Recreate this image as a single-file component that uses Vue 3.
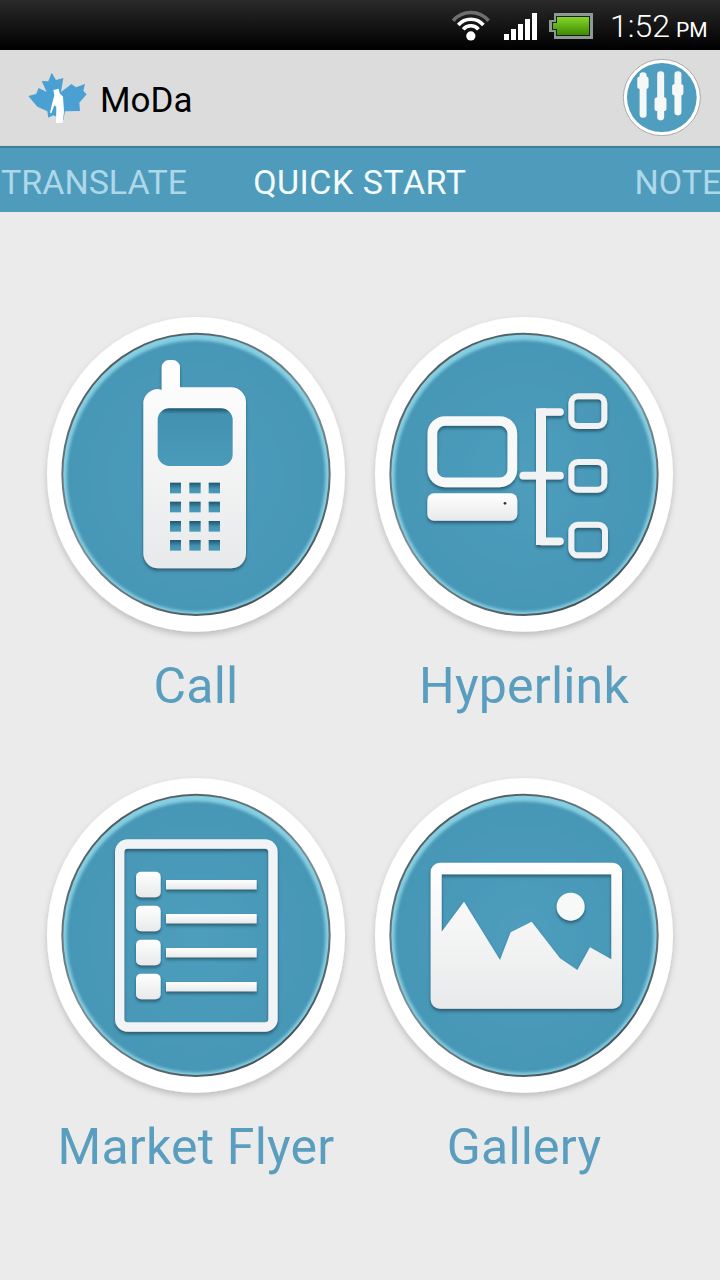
<template>
  <div class="screen">
    <svg class="defs" width="0" height="0">
      <defs>
        <linearGradient id="white" x1="0" y1="0" x2="0" y2="1">
          <stop offset="0" stop-color="#ffffff" />
          <stop offset="1" stop-color="#e8e9ea" />
        </linearGradient>
        <linearGradient id="hole" x1="0" y1="0" x2="0" y2="1">
          <stop offset="0" stop-color="#1d566d" />
          <stop offset="0.55" stop-color="#4391b0" />
          <stop offset="1" stop-color="#4a9aba" />
        </linearGradient>
        <linearGradient id="lcd" x1="0" y1="0" x2="0" y2="1">
          <stop offset="0" stop-color="#1d566d" />
          <stop offset="0.1" stop-color="#4391b0" />
          <stop offset="1" stop-color="#4a9aba" />
        </linearGradient>
        <radialGradient id="disc">
          <stop offset="0" stop-color="#4e9dbd" />
          <stop offset="1" stop-color="#4696b6" />
        </radialGradient>
        <linearGradient id="rim" x1="0.2" y1="0" x2="0.8" y2="1">
          <stop offset="0" stop-color="#4a5559" />
          <stop offset="0.5" stop-color="#7f8f95" />
          <stop offset="1" stop-color="#3f4a4e" />
        </linearGradient>
        <linearGradient id="bat" x1="0" y1="0" x2="0" y2="1">
          <stop offset="0" stop-color="#86d62a" />
          <stop offset="1" stop-color="#3d8a02" />
        </linearGradient>
        <filter id="soft" x="-10%" y="-10%" width="120%" height="125%">
          <feDropShadow dx="0" dy="10" stdDeviation="10" flood-color="#000" flood-opacity="0.2" />
        </filter>
        <filter id="lift" x="-10%" y="-10%" width="120%" height="125%">
          <feDropShadow dx="0" dy="7" stdDeviation="5" flood-color="#0b3342" flood-opacity="0.6" />
        </filter>
        <filter id="blur4">
          <feGaussianBlur stdDeviation="4" />
        </filter>
      </defs>
    </svg>

    <div class="statusbar">
      <svg class="wifi" viewBox="95 28 115 96" width="38" height="32">
        <path d="M98.400 60 A70 70 0 0 1 205.600 60" fill="none" stroke="#6f6f6f" stroke-width="11" />
        <path d="M114 73 A50 50 0 0 1 190 73" fill="none" stroke="#fff" stroke-width="11" />
        <path d="M129 86 A30 30 0 0 1 175 86" fill="none" stroke="#fff" stroke-width="11" />
        <circle cx="152" cy="106" r="14" fill="#fff" />
      </svg>
      <div class="signal">
        <span v-for="h in bars" :key="h" :style="{ height: h + 'px' }"></span>
      </div>
      <svg class="battery" viewBox="0 0 44 26" width="44" height="26">
        <path d="M5 0H44V26H5V19H0V7H5Z" fill="#8d9a94" />
        <path d="M7 3H41V23H7V17H3V9H7Z" fill="#1a1d1b" />
        <path d="M8 4H40V22H8V16H4V10H8Z" fill="url(#bat)" />
      </svg>
      <div class="clock">1:52<small>PM</small></div>
    </div>

    <header class="appbar">
      <svg class="logo" viewBox="84 68 180 156" width="60" height="52">
        <path d="M155 70L168 92L190 86L183 128L204 112L214 104L228 114L255 104L250 125L260 135L238 160L240 185L195 186L190 212L160 198L145 205L142 186L112 172L85 140L108 134L116 116L140 128L125 95L145 96Z" fill="#4aa0d2" />
        <path d="M160 122L176 118L179 132L189 142L192 188L188 220L168 221L169 172L163 168L154 192L150 190L157 160L163 138Z" fill="#fff" />
      </svg>
      <span class="title">MoDa</span>
      <svg class="settings" viewBox="15 15 235 232" width="78" height="77">
        <ellipse cx="132" cy="131" rx="116" ry="115" fill="#fff" stroke="#a9a9a9" stroke-width="3" />
        <ellipse cx="132" cy="131" rx="105" ry="104" fill="#4f9dbf" />
        <g fill="#f6f7f7">
          <rect x="65" y="55" width="21" height="137" rx="10" />
          <rect x="58" y="68" width="34" height="37" rx="8" />
          <rect x="118" y="52" width="21" height="148" rx="10" />
          <rect x="110" y="130" width="36" height="42" rx="8" />
          <rect x="170" y="52" width="21" height="133" rx="10" />
          <rect x="163" y="90" width="34" height="35" rx="8" />
        </g>
      </svg>
    </header>

    <nav class="tabs">
      <span class="tab first">TRANSLATE</span>
      <span class="tab active">QUICK START</span>
      <span class="tab last">NOTE</span>
    </nav>

    <main class="grid">
      <div v-for="t in tiles" :key="t.id" class="tile">
        <svg :viewBox="t.box" width="298" height="315">
          <ellipse :cx="t.cx" :cy="t.cy" rx="447" ry="472" fill="#fff" filter="url(#soft)" />
          <ellipse :cx="t.cx" :cy="t.cy" rx="404" ry="425" fill="url(#rim)" />
          <ellipse :cx="t.cx" :cy="t.cy" rx="398" ry="419" fill="#86cfe2" />
          <ellipse :cx="t.cx" :cy="t.cy + 5" rx="388" ry="407" fill="url(#disc)" filter="url(#blur4)" />

          <g v-if="t.id === 'call'">
            <g fill="url(#white)" filter="url(#lift)">
              <path d="M365 240V172a22 22 0 0 1 22-22h11a22 22 0 0 1 22 22v60h153a45 45 0 0 1 45 45v453a45 45 0 0 1-45 45H355a45 45 0 0 1-45-45V277a45 45 0 0 1 45-40z" />
            </g>
            <rect x="353" y="295" width="225" height="173" rx="35" fill="url(#lcd)" />
            <g fill="url(#hole)">
              <template v-for="y in [518, 575, 633, 690]" :key="y">
                <rect x="390" :y="y" width="33" height="32" />
                <rect x="448" :y="y" width="34" height="32" />
                <rect x="506" :y="y" width="34" height="32" />
              </template>
            </g>
          </g>

          <g v-else-if="t.id === 'link'" filter="url(#lift)">
            <rect x="187" y="333" width="240" height="184" rx="38" fill="none" stroke="#f7f8f8" stroke-width="29" />
            <rect x="172" y="550" width="270" height="82" rx="20" fill="url(#white)" />
            <circle cx="405" cy="580" r="4" fill="#333" />
            <rect x="498" y="295" width="30" height="410" fill="#f1f2f3" />
            <path d="M513 306H570M513 694H570M460 497H570" fill="none" stroke="#f1f2f3" stroke-width="23" stroke-linecap="round" />
            <g fill="none" stroke="#f1f2f3" stroke-width="18">
              <rect x="604" y="259" width="99" height="89" rx="20" />
              <rect x="604" y="456" width="99" height="83" rx="20" />
              <rect x="604" y="644" width="101" height="92" rx="20" />
            </g>
          </g>

          <g v-else-if="t.id === 'flyer'" filter="url(#lift)">
            <rect x="239" y="222" width="460" height="549" rx="24" fill="none" stroke="#f2f3f4" stroke-width="28" />
            <template v-for="y in [305, 407, 509, 611]" :key="y">
              <rect x="288" :y="y" width="74" height="77" rx="15" fill="url(#white)" />
              <rect x="378" :y="y + 25" width="272" height="28" fill="url(#white)" />
            </template>
          </g>

          <g v-else filter="url(#lift)">
            <path fill-rule="evenodd" fill="url(#white)" d="M210 278H728a28 28 0 0 1 28 28V688a28 28 0 0 1-28 28H210a28 28 0 0 1-28-28V306a28 28 0 0 1 28-28zM215 313V485L282 395L390 570L422 487L485 455L570 565L622 600L660 532L724 568V313z" />
            <circle cx="602" cy="410" r="42" fill="#f7f8f8" />
          </g>
        </svg>
        <div class="label">{{ t.label }}</div>
      </div>
    </main>
  </div>
</template>

<script setup>
const bars = [6, 11, 16, 21, 27]
const tiles = [
  { id: 'call', label: 'Call', box: '21 21 894 945', cx: 468, cy: 493 },
  { id: 'link', label: 'Hyperlink', box: '15 21 894 945', cx: 462, cy: 493 },
  { id: 'flyer', label: 'Market Flyer', box: '21 24 894 945', cx: 468, cy: 496 },
  { id: 'gallery', label: 'Gallery', box: '15 24 894 945', cx: 462, cy: 496 }
]
</script>

<style>
html, body { margin: 0; background: #ebebeb; }
</style>

<style scoped>
.screen {
  width: 720px;
  height: 1280px;
  overflow: hidden;
  background: #ebebeb;
  font-family: Roboto, "Liberation Sans", sans-serif;
}
.defs { display: block; }
.statusbar {
  height: 50px;
  display: flex;
  align-items: center;
  padding-left: 452px;
  box-sizing: border-box;
  background: linear-gradient(#2a2a2a, #000);
  color: #fff;
}
.wifi { margin-top: 2px; }
.signal {
  display: flex;
  align-items: flex-end;
  gap: 2px;
  height: 27px;
  margin: 3px 0 0 14px;
}
.signal span { width: 5px; background: #fff; }
.battery { margin: 2px 0 0 12px; }
.clock {
  margin: 2px 0 0 17px;
  font-size: 32px;
  font-weight: 300;
  white-space: nowrap;
}
.clock small { font-size: 21px; font-weight: 400; margin-left: 6px; }
.appbar {
  height: 96px;
  box-sizing: border-box;
  display: flex;
  align-items: center;
  padding: 0 19px 0 28px;
  background: #dcdcdc;
  border-bottom: 1px solid #d4d4d4;
}
.title { margin: 5px 0 0 12px; font-size: 35px; color: #000; }
.settings { margin-left: auto; }
.tabs {
  height: 66px;
  box-sizing: border-box;
  padding-top: 4px;
  display: flex;
  align-items: center;
  overflow: hidden;
  white-space: nowrap;
  background: #4f9bbc;
  border-top: 2px solid #3d8299;
  font-size: 34px;
  color: #acd8ea;
}
.tab.first { margin-left: 1px; }
.tab.active { margin-left: 66px; color: #f4fbfd; letter-spacing: 0.5px; }
.tab.last { margin-left: 168px; }
.grid {
  display: grid;
  grid-template-columns: 298px 298px;
  column-gap: 30px;
  row-gap: 60px;
  padding: 105px 0 0 47px;
}
.tile svg { display: block; overflow: visible; }
.label {
  margin-top: 22px;
  text-align: center;
  font-size: 50px;
  line-height: 64px;
  letter-spacing: 0.2px;
  color: #5a9ebf;
  white-space: nowrap;
}
</style>
